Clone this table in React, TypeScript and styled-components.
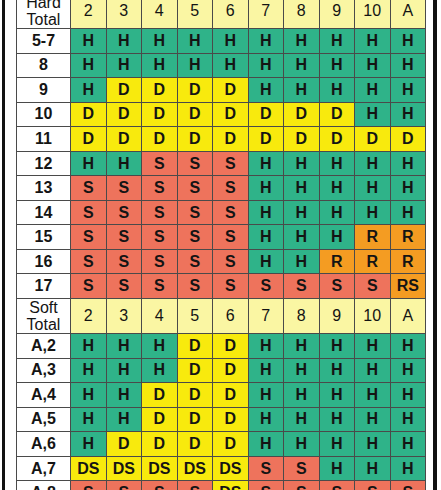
import React, { FC } from 'react'
import styled, { createGlobalStyle } from 'styled-components'

type Move = 'H' | 'D' | 'S' | 'R' | 'RS' | 'DS'

const HEADERS = ['2', '3', '4', '5', '6', '7', '8', '9', '10', 'A']

const HARD: [string, Move[]][] = [
  ['5-7', ['H', 'H', 'H', 'H', 'H', 'H', 'H', 'H', 'H', 'H']],
  ['8', ['H', 'H', 'H', 'H', 'H', 'H', 'H', 'H', 'H', 'H']],
  ['9', ['H', 'D', 'D', 'D', 'D', 'H', 'H', 'H', 'H', 'H']],
  ['10', ['D', 'D', 'D', 'D', 'D', 'D', 'D', 'D', 'H', 'H']],
  ['11', ['D', 'D', 'D', 'D', 'D', 'D', 'D', 'D', 'D', 'D']],
  ['12', ['H', 'H', 'S', 'S', 'S', 'H', 'H', 'H', 'H', 'H']],
  ['13', ['S', 'S', 'S', 'S', 'S', 'H', 'H', 'H', 'H', 'H']],
  ['14', ['S', 'S', 'S', 'S', 'S', 'H', 'H', 'H', 'H', 'H']],
  ['15', ['S', 'S', 'S', 'S', 'S', 'H', 'H', 'H', 'R', 'R']],
  ['16', ['S', 'S', 'S', 'S', 'S', 'H', 'H', 'R', 'R', 'R']],
  ['17', ['S', 'S', 'S', 'S', 'S', 'S', 'S', 'S', 'S', 'RS']],
]

const SOFT: [string, Move[]][] = [
  ['A,2', ['H', 'H', 'H', 'D', 'D', 'H', 'H', 'H', 'H', 'H']],
  ['A,3', ['H', 'H', 'H', 'D', 'D', 'H', 'H', 'H', 'H', 'H']],
  ['A,4', ['H', 'H', 'D', 'D', 'D', 'H', 'H', 'H', 'H', 'H']],
  ['A,5', ['H', 'H', 'D', 'D', 'D', 'H', 'H', 'H', 'H', 'H']],
  ['A,6', ['H', 'D', 'D', 'D', 'D', 'H', 'H', 'H', 'H', 'H']],
  ['A,7', ['DS', 'DS', 'DS', 'DS', 'DS', 'S', 'S', 'H', 'H', 'H']],
  ['A,8', ['S', 'S', 'S', 'S', 'DS', 'S', 'S', 'S', 'S', 'S']],
]

const MOVE_COLORS: Record<Move, string> = {
  H: '#2fb389',
  D: '#f8ea0d',
  DS: '#f8ea0d',
  S: '#ee735c',
  R: '#f49c22',
  RS: '#f49c22',
}

const GlobalStyle = createGlobalStyle`
  body {
    margin: 0;
    background: #ffffff;
    font-family: "Liberation Sans", Arial, sans-serif;
  }
`

const Section: FC<{ title: string; rows: [string, Move[]][] }> = ({ title, rows }) => (
  <>
    <HeadLabel>
      {title}
      <br />
      Total
    </HeadLabel>
    {HEADERS.map((h) => (
      <HeadCell key={title + h}>{h}</HeadCell>
    ))}
    {rows.map(([label, moves]) => (
      <React.Fragment key={label}>
        <RowLabel>{label}</RowLabel>
        {moves.map((m, i) => (
          <MoveCell key={label + i} $move={m}>
            {m}
          </MoveCell>
        ))}
      </React.Fragment>
    ))}
  </>
)

export default function App() {
  return (
    <>
      <GlobalStyle />
      <Frame>
        <Chart>
          <Section title="Hard" rows={HARD} />
          <Section title="Soft" rows={SOFT} />
        </Chart>
      </Frame>
    </>
  )
}

const Frame = styled.div`
  box-sizing: border-box;
  width: 435px;
  height: 490px;
  margin-left: 2px;
  padding-left: 11px;
  border-left: 3px solid #111;
  border-right: 4px solid #111;
  overflow: hidden;
  background: #fff;
`

const Chart = styled.div`
  display: grid;
  grid-template-columns: 53px repeat(10, 34.5px);
  grid-template-rows: 34px repeat(11, 23.55px) 34px repeat(7, 23.55px);
  gap: 1px;
  padding: 1px;
  width: max-content;
  margin-top: -7px;
  background: #4a4a4a;
`

const Cell = styled.div`
  display: flex;
  align-items: center;
  justify-content: center;
  color: #141414;
  font-size: 15px;
`

const HeadLabel = styled(Cell)`
  background: #fff;
  font-size: 16px;
  line-height: 17px;
  text-align: center;
`

const HeadCell = styled(Cell)`
  background: #faf6a3;
  font-size: 16px;
`

const RowLabel = styled(Cell)`
  background: #fff;
  font-weight: bold;
  font-size: 16px;
`

const MoveCell = styled(Cell)<{ $move: Move }>`
  background: ${(p) => MOVE_COLORS[p.$move]};
  font-weight: bold;
  font-size: 16px;
`
